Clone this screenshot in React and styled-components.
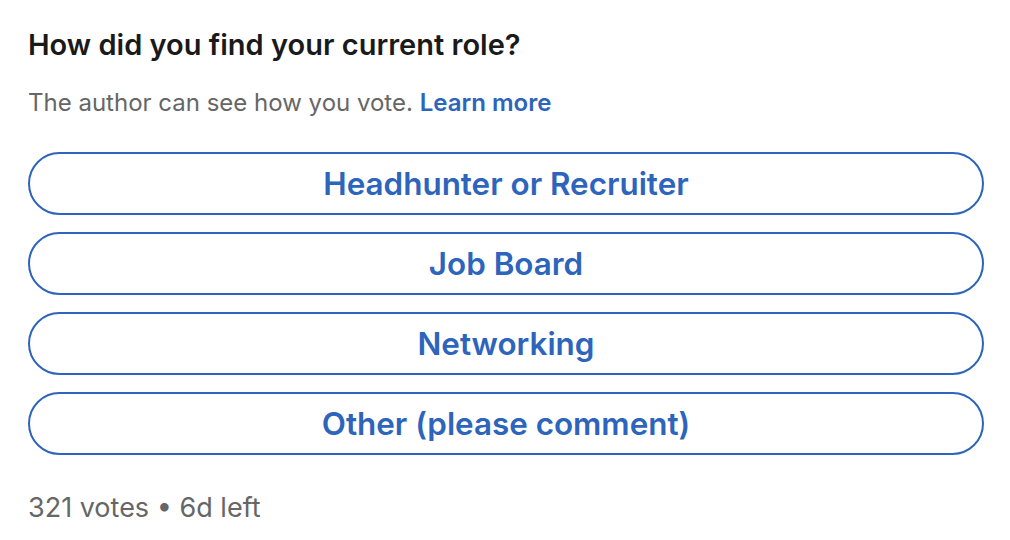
import styled, { createGlobalStyle } from "styled-components";

const GlobalStyle = createGlobalStyle`
  body {
    margin: 0;
    background: #ffffff;
    font-family: Inter, "Noto Sans", "Liberation Sans", sans-serif;
  }
`;

const options = [
  "Headhunter or Recruiter",
  "Job Board",
  "Networking",
  "Other (please comment)",
];

const StyledPoll = styled.div`
  display: flex;
  flex-direction: column;
  width: 956px;
  padding: 27px 26px 0 28px;
`;

const StyledQuestion = styled.h2`
  margin: 0;
  font-size: 29px;
  line-height: 36px;
  font-weight: 600;
  color: #1a1a1a;
`;

const StyledNote = styled.p`
  margin: 24px 0 0 0;
  font-size: 24px;
  line-height: 32px;
  color: #666666;
`;

const StyledLink = styled.a`
  color: #2d64bc;
  font-weight: 600;
  text-decoration: none;
  cursor: pointer;
`;

const StyledOptions = styled.div`
  display: flex;
  flex-direction: column;
  gap: 17px;
  margin-top: 33px;
`;

const StyledOption = styled.button`
  height: 63px;
  width: 100%;
  border: 2px solid #2d64bc;
  border-radius: 32px;
  background: #ffffff;
  color: #2d64bc;
  font-family: inherit;
  font-size: 31.4px;
  font-weight: 600;
  cursor: pointer;
`;

const StyledFooter = styled.div`
  margin-top: 37px;
  font-size: 27px;
  line-height: 32px;
  color: #666666;
`;

function App() {
  return (
    <>
      <GlobalStyle />
      <StyledPoll>
        <StyledQuestion>How did you find your current role?</StyledQuestion>
        <StyledNote>
          The author can see how you vote. <StyledLink>Learn more</StyledLink>
        </StyledNote>
        <StyledOptions>
          {options.map((label) => (
            <StyledOption key={label}>{label}</StyledOption>
          ))}
        </StyledOptions>
        <StyledFooter>321 votes • 6d left</StyledFooter>
      </StyledPoll>
    </>
  );
}

export default App;
